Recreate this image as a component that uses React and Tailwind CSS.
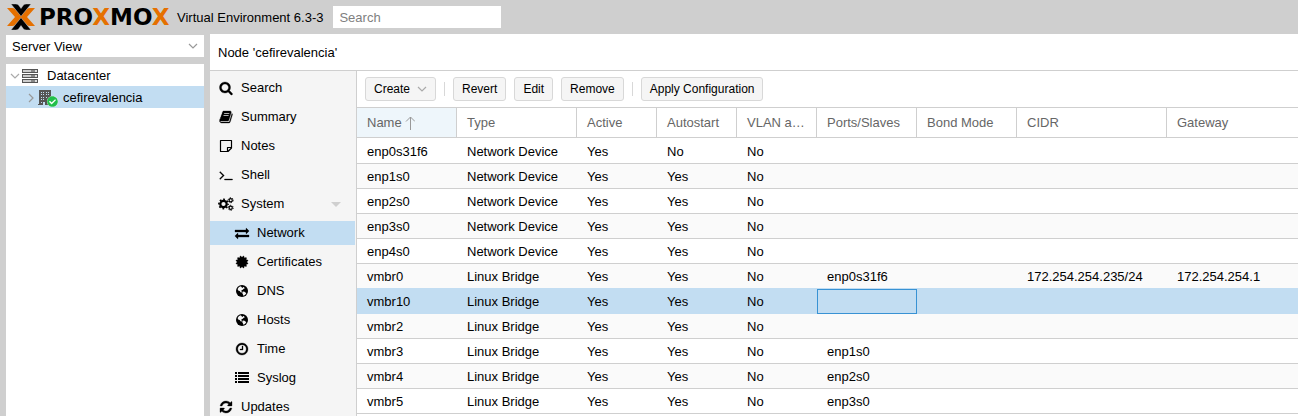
import React from "react";
import { FaCheckCircle } from "react-icons/fa";

const paths = {
  search:
    "M1216 832q0-185-131.5-316.5t-316.5-131.5-316.5 131.5-131.5 316.5 131.5 316.5 316.5 131.5 316.5-131.5 131.5-316.5zm512 832q0 52-38 90t-90 38q-54 0-90-38l-343-342q-179 124-399 124-143 0-273.5-55.5t-225-150-150-225-55.5-273.5 55.5-273.5 150-225 225-150 273.5-55.5 273.5 55.5 225 150 150 225 55.5 273.5q0 220-124 399l343 343q37 37 37 90z",
  book:
    "M1703 478q40 57 18 129l-275 906q-19 64-76.5 107.5t-122.5 43.5h-923q-77 0-148.5-53.5t-99.5-131.5q-24-67-2-127 0-4 3-27t4-37q1-8-3-21.5t-3-19.5q2-11 8-21t16.5-23.5 16.5-23.5q23-38 45-91.5t30-91.5q3-10 .5-30t-.5-28q3-11 17-28t17-23q21-36 42-92t25-90q1-9-2.500-32t.5-28q4-13 22-30.5t22-22.5q19-26 42.5-84.5t27.5-96.5q1-8-3-25.500t-2-26.500q2-8 9-18t18-23 17-21q8-12 16.500-30.500t15-35 16-36 19.500-32 26.500-23.500 36-11.500 47.500 5.500l-1 3q38-9 51-9h761q74 0 114 56t18 130l-274 906q-36 119-71.500 153.500t-128.500 34.500h-869q-27 0-38 15-11 16-1 43 24 70 144 70h923q29 0 56-15.500t35-41.500l300-987q7-22 5-57 38 15 59 43zm-1064 2q-4 13 2 22.500t20 9.500h608q13 0 25.500-9.500t16.500-22.500l21-64q4-13-2-22.500t-20-9.500h-608q-13 0-25.500 9.500t-16.500 22.500zm-83 256q-4 13 2 22.500t20 9.500h608q13 0 25.500-9.500t16.500-22.500l21-64q4-13-2-22.500t-20-9.500h-608q-13 0-25.500 9.500t-16.500 22.500z",
  terminal:
    "M649 983l-466 466q-10 10-23 10t-23-10l-50-50q-10-10-10-23t10-23l393-393-393-393q-10-10-10-23t10-23l50-50q10-10 23-10t23 10l466 466q10 10 10 23t-10 23zm1079 457v64q0 14-9 23t-23 9h-960q-14 0-23-9t-9-23v-64q0-14 9-23t23-9h960q14 0 23 9t9 23z",
  exchange:
    "M1792 1184v192q0 13-9.5 22.5t-22.5 9.5h-1376v192q0 13-9.5 22.5t-22.5 9.5q-12 0-24-10l-319-320q-9-9-9-22 0-14 9-23l320-320q9-9 23-9 13 0 22.5 9.5t9.5 22.5v192h1376q13 0 22.5 9.5t9.5 22.5zm0-544q0 14-9 23l-320 320q-9 9-23 9-13 0-22.5-9.5t-9.5-22.5v-192h-1376q-13 0-22.5-9.5t-9.5-22.5v-192q0-13 9.5-22.5t22.5-9.5h1376v-192q0-14 9-23t23-9q12 0 24 10l319 319q9 9 9 23z",
  certificate:
    "M1504 896l138 135q30 28 20 70-12 41-52 51l-188 48 53 186q12 41-19 70-29 31-70 19l-186-53-48 188q-10 40-51 52-12 2-19 2-31 0-51-22l-135-138-135 138q-28 30-70 20-41-11-51-52l-48-188-186 53q-41 12-70-19-31-29-19-70l53-186-188-48q-40-10-52-51-10-42 20-70l138-135-138-135q-30-28-20-70 12-41 52-51l188-48-53-186q-12-41 19-70 29-31 70-19l186 53 48-188q10-41 51-51 41-12 70 19l135 139 135-139q29-30 70-19 41 10 51 51l48 188 186-53q41-12 70 19 31 29 19 70l-53 186 188 48q40 10 52 51 10 42-20 70z",
  clock:
    "M1024 544v448q0 14-9 23t-23 9h-320q-14 0-23-9t-9-23v-64q0-14 9-23t23-9h224v-352q0-14 9-23t23-9h64q14 0 23 9t9 23zm416 352q0-148-73-273t-198-198-273-73-273 73-198 198-73 273 73 273 198 198 273 73 273-73 198-198 73-273zm224 0q0 209-103 385.5t-279.5 279.5-385.5 103-385.5-103-279.5-279.5-103-385.5 103-385.5 279.5-279.5 385.5-103 385.5 103 279.5 279.5 103 385.5z",
  refresh:
    "M1639 1056q0 5-1 7-64 268-268 434.5t-478 166.5q-146 0-282.5-55t-243.5-157l-129 129q-19 19-45 19t-45-19-19-45v-448q0-26 19-45t45-19h448q26 0 45 19t19 45-19 45l-137 137q71 66 161 102t187 36q134 0 250-65t186-179q11-17 53-117 8-23 30-23h192q13 0 22.5 9.5t9.5 22.5zm25-800v448q0 26-19 45t-45 19h-448q-26 0-45-19t-19-45 19-45l138-138q-148-137-349-137-134 0-250 65t-186 179q-11 17-53 117-8 23-30 23h-199q-13 0-22.5-9.5t-9.5-22.5v-7q65-268 270-434.5t480-166.5q146 0 284 55.5t245 156.5l130-129q19-19 45-19t45 19 19 45z",
};

function Glyph({ name }) {
  return (
    <svg
      viewBox="0 0 1792 1792"
      className="size-3.5"
      fill="currentColor"
      stroke="currentColor"
      strokeWidth="40"
      overflow="visible"
      aria-hidden="true"
    >
      <path d={paths[name]} />
    </svg>
  );
}

function NoteIcon() {
  return (
    <svg viewBox="0 0 14 14" className="size-3.5" fill="none" stroke="currentColor" aria-hidden="true">
      <path d="M1.5 1.5h11v7.500l-3.500 3.500h-7.500zM12.500 8.500h-4v4" strokeLinejoin="round" strokeWidth="1.2" />
    </svg>
  );
}

function ListIcon() {
  return (
    <svg viewBox="0 0 14 14" className="size-3.5" fill="currentColor" aria-hidden="true">
      <path d="M0 1h2v2H0zM3 1h11v2H3zM0 4h2v2H0zM3 4h11v2H3zM0 7h2v2H0zM3 7h11v2H3zM0 10h2v2H0zM3 10h11v2H3z" />
    </svg>
  );
}

function GearsIcon() {
  return (
    <svg viewBox="0 0 16 14" className="h-3.5 w-4" fill="none" stroke="currentColor" aria-hidden="true">
      <circle cx="5.500" cy="7" r="3.200" strokeWidth="2.200" />
      <circle cx="5.500" cy="7" r="4.600" strokeWidth="1.600" strokeDasharray="1.810 1.803" strokeDashoffset="0.9" />
      <circle cx="12.700" cy="3.200" r="1.600" strokeWidth="1.200" />
      <circle cx="12.700" cy="3.200" r="2.500" strokeWidth="1" strokeDasharray="1.310 1.308" />
      <circle cx="12.700" cy="10.800" r="1.600" strokeWidth="1.200" />
      <circle cx="12.700" cy="10.800" r="2.500" strokeWidth="1" strokeDasharray="1.310 1.308" />
    </svg>
  );
}

function GlobeIcon() {
  return (
    <svg viewBox="0 0 12 12" className="size-3" aria-hidden="true">
      <circle cx="6" cy="6" r="6" fill="currentColor" />
      <path
        d="M4.800 1.200L3 2 1.600 4l.6 1.500 1.500.6.8 1.200 1.300.3.3-.8-.9-.5.4-1 1.200-.5.9-1.100 1-.3-.6-1.200-1-.2-.3.900-.9-.4zM6.500 6.800l1.500-.3 1.500 1 .8.700-1.300 1.700-1.600.9-.5-1.500-.6-1z"
        fill="#f5f5f5"
      />
    </svg>
  );
}

function ServerIcon() {
  return (
    <svg viewBox="0 0 16 14" className="h-3.5 w-4 shrink-0" aria-hidden="true">
      {[0, 5, 10].map((y) => (
        <g key={y}>
          <rect x="0" y={y} width="16" height="4" fill="#555" />
          <rect x="1" y={y + 1} width="8" height="2" fill="#ccc" />
          <rect x="9" y={y + 1} width="4" height="2" fill="#888" />
          <rect x="13" y={y + 1} width="2" height="2" fill="#ddd" />
        </g>
      ))}
    </svg>
  );
}

function NodeIcon() {
  return (
    <span className="relative block h-4 w-5 shrink-0">
      <svg viewBox="0 0 14 16" className="h-4 w-3.5" aria-hidden="true">
        <path d="M1 0h12v15H0v-1h1z" fill="#555" />
        <path
          d="M3 2h1v1H3zM5 2h1v1H5zM8 2h1v1H8zM10 2h1v1h-1zM3 4h1v1H3zM5 4h1v1H5zM8 4h1v1H8zM10 4h1v1h-1zM3 7h1v1H3zM5 7h1v1H5zM8 7h1v1H8zM3 9h1v1H3zM5 9h1v1H5zM3 12h1v1H3zM5 12h2v3H5z"
          fill="#c2ddf2"
        />
      </svg>
      <span className="absolute right-0 -bottom-px rounded-full bg-white">
        <FaCheckCircle className="size-[11px] text-[#21bf4b]" />
      </span>
    </span>
  );
}

function Chevron({ className }) {
  return (
    <svg viewBox="0 0 10 10" className={className} fill="none" stroke="currentColor" aria-hidden="true">
      <path d="M1 3l4 4 4-4" strokeWidth="1.200" />
    </svg>
  );
}

function Logo() {
  return (
    <div className="flex items-center gap-1">
      <svg viewBox="0 0 28 26" className="h-[26px] w-7" aria-hidden="true">
        <g fill="#e57000">
          <path d="M0 4h5q2 0 3 1l7 8-7 8q-1 1-3 1H0l8-9z" />
          <path d="M28 4h-5q-2 0-3 1l-7 8 7 8q1 1 3 1h5l-8-9z" />
        </g>
        <g fill="#000" stroke="#cfcfcf" strokeWidth=".4">
          <path d="M4 0h4.500q2 0 3 1l2.500 3.500 2.500-3.500q1-1 3-1H24L14 12.300z" />
          <path d="M4 26h4.500q2 0 3-1l2.500-3.500 2.500 3.500q1 1 3 1H24L14 13.700z" />
        </g>
      </svg>
      <span className="w-[138px] font-['DejaVu_Sans',sans-serif] text-[23px] leading-6 font-bold">
        PRO<span className="text-[#e57000]">X</span>MO<span className="text-[#e57000]">X</span>
      </span>
    </div>
  );
}

const menu = [
  { label: "Search", icon: <Glyph name="search" /> },
  { label: "Summary", icon: <Glyph name="book" /> },
  { label: "Notes", icon: <NoteIcon /> },
  { label: "Shell", icon: <Glyph name="terminal" /> },
  { label: "System", icon: <GearsIcon />, expanded: true },
  { label: "Network", icon: <Glyph name="exchange" />, sub: true, active: true },
  { label: "Certificates", icon: <Glyph name="certificate" />, sub: true },
  { label: "DNS", icon: <GlobeIcon />, sub: true },
  { label: "Hosts", icon: <GlobeIcon />, sub: true },
  { label: "Time", icon: <Glyph name="clock" />, sub: true },
  { label: "Syslog", icon: <ListIcon />, sub: true },
  { label: "Updates", icon: <Glyph name="refresh" /> },
];

const columns = [
  ["Name", "w-[100px]"],
  ["Type", "w-[120px]"],
  ["Active", "w-20"],
  ["Autostart", "w-20"],
  ["VLAN a…", "w-20"],
  ["Ports/Slaves", "w-[100px]"],
  ["Bond Mode", "w-[100px]"],
  ["CIDR", "w-[150px]"],
  ["Gateway", ""],
];

const rows = [
  ["enp0s31f6", "Network Device", "Yes", "No", "No", "", "", "", ""],
  ["enp1s0", "Network Device", "Yes", "Yes", "No", "", "", "", ""],
  ["enp2s0", "Network Device", "Yes", "Yes", "No", "", "", "", ""],
  ["enp3s0", "Network Device", "Yes", "Yes", "No", "", "", "", ""],
  ["enp4s0", "Network Device", "Yes", "Yes", "No", "", "", "", ""],
  ["vmbr0", "Linux Bridge", "Yes", "Yes", "No", "enp0s31f6", "", "172.254.254.235/24", "172.254.254.1"],
  ["vmbr10", "Linux Bridge", "Yes", "Yes", "No", "", "", "", ""],
  ["vmbr2", "Linux Bridge", "Yes", "Yes", "No", "", "", "", ""],
  ["vmbr3", "Linux Bridge", "Yes", "Yes", "No", "enp1s0", "", "", ""],
  ["vmbr4", "Linux Bridge", "Yes", "Yes", "No", "enp2s0", "", "", ""],
  ["vmbr5", "Linux Bridge", "Yes", "Yes", "No", "enp3s0", "", "", ""],
];
const selected = 6;
const focusedColumn = 5;

function ToolButton({ children }) {
  return (
    <button
      type="button"
      className="flex h-6 items-center gap-[7px] rounded-[3px] border border-[#d8d8d8] bg-[#f5f5f5] px-2 text-xs whitespace-nowrap"
    >
      {children}
    </button>
  );
}

function Separator() {
  return <span className="h-3.5 w-px bg-[#d8d8d8]" />;
}

function InterfaceTable() {
  return (
    <table className="w-full table-fixed border-separate border-spacing-0 text-left">
      <thead>
        <tr className="text-[#666]">
          {columns.map(([label, width], i) => (
            <th
              key={label}
              scope="col"
              className={`h-[31px] border-y border-[#cfcfcf] px-2.5 font-normal ${width} ${
                i < columns.length - 1 ? "border-r" : ""
              } ${i === 0 ? "bg-[#eef6fb]" : ""}`}
            >
              <div className="flex items-center gap-[3px] whitespace-nowrap">
                {label}
                {i === 0 && (
                  <svg viewBox="0 0 10 14" className="h-3.5 w-2.5" fill="none" stroke="#999" aria-hidden="true">
                    <path d="M5.500 14V1M1 5.500l4.500-4.500 4.500 4.500" />
                  </svg>
                )}
              </div>
            </th>
          ))}
        </tr>
      </thead>
      <tbody>
        {rows.map((row, r) => (
          <tr
            key={row[0]}
            className={r === selected ? "bg-[#c2ddf2]" : r % 2 ? "bg-[#fafafa]" : "bg-white"}
          >
            {row.map((value, c) => (
              <td
                key={c}
                className={`border-b px-2.5 pt-0.5 ${r === 0 ? "h-[26px]" : "h-[25px]"} ${
                  r === selected || r === selected - 1 ? "border-[#c2ddf2]" : "border-[#cfcfcf]"
                } ${r === selected && c === focusedColumn ? "outline -outline-offset-1 outline-[#3892d4]" : ""}`}
              >
                {value}
              </td>
            ))}
          </tr>
        ))}
      </tbody>
    </table>
  );
}

export default function App() {
  return (
    <div className="flex h-screen flex-col overflow-hidden bg-[#cfcfcf] font-['Liberation_Sans',Arial,sans-serif] text-[13px] leading-4 text-black">
      <header className="flex h-[34px] shrink-0 items-center pl-[7px]">
        <Logo />
        <span className="mr-2.5 pt-0.5 whitespace-nowrap">Virtual Environment 6.3-3</span>
        <input
          type="text"
          aria-label="Search"
          placeholder="Search"
          className="h-[22px] w-[168px] bg-white px-1.5 placeholder:text-[#808080]"
        />
      </header>

      <div className="flex min-h-0 flex-1">
        <aside className="flex w-[210px] shrink-0 flex-col gap-[7px] px-1.5 pt-px">
          <button type="button" className="flex h-[22px] shrink-0 items-center justify-between bg-white px-1.5 pt-0.5">
            Server View
            <Chevron className="mb-0.5 size-2.5 text-[#999]" />
          </button>
          <ul role="tree" className="flex-1 bg-white">
            <li role="treeitem" aria-expanded="true" className="flex h-[22px] items-center pt-0.5 pl-1">
              <Chevron className="mr-0.5 size-2.5 text-[#aaa]" />
              <ServerIcon />
              <span className="ml-[9px]">Datacenter</span>
            </li>
            <li
              role="treeitem"
              aria-expanded="false"
              aria-selected="true"
              className="flex h-[22px] items-center bg-[#c2ddf2] pt-0.5 pl-5"
            >
              <Chevron className="mr-0.5 size-2.5 -rotate-90 text-[#999]" />
              <NodeIcon />
              <span className="ml-[5px]">cefirevalencia</span>
            </li>
          </ul>
        </aside>

        <main className="flex min-w-0 flex-1 flex-col bg-white">
          <h1 className="flex h-[37px] shrink-0 items-center border-b border-[#cfcfcf] px-2 pt-0.5">Node 'cefirevalencia'</h1>
          <div className="flex min-h-0 flex-1">
            <nav className="flex w-[147px] shrink-0 flex-col gap-[5px] overflow-hidden border-r border-[#cfcfcf] bg-[#f5f5f5] pt-[5px] pr-px">
              {menu.map((item) => (
                <a
                  key={item.label}
                  href="#"
                  className={`flex h-6 shrink-0 items-center gap-[7px] pr-3.5 ${item.sub ? "pl-6" : "pl-2"} ${
                    item.active ? "bg-[#c2ddf2]" : ""
                  }`}
                >
                  <span className="flex w-4 justify-center">{item.icon}</span>
                  <span className="flex-1">{item.label}</span>
                  {item.expanded && (
                    <svg viewBox="0 0 10 5" className="h-[5px] w-2.5" fill="#cfcfcf" aria-hidden="true">
                      <path d="M0 0h10L5 5z" />
                    </svg>
                  )}
                </a>
              ))}
            </nav>
            <section className="min-w-0 flex-1 overflow-hidden">
              <div className="flex h-9 items-center gap-2 px-2">
                <ToolButton>
                  Create
                  <Chevron className="size-2.5 text-[#aaa]" />
                </ToolButton>
                <Separator />
                <ToolButton>Revert</ToolButton>
                <ToolButton>Edit</ToolButton>
                <ToolButton>Remove</ToolButton>
                <Separator />
                <ToolButton>Apply Configuration</ToolButton>
              </div>
              <InterfaceTable />
            </section>
          </div>
        </main>
      </div>
    </div>
  );
}
